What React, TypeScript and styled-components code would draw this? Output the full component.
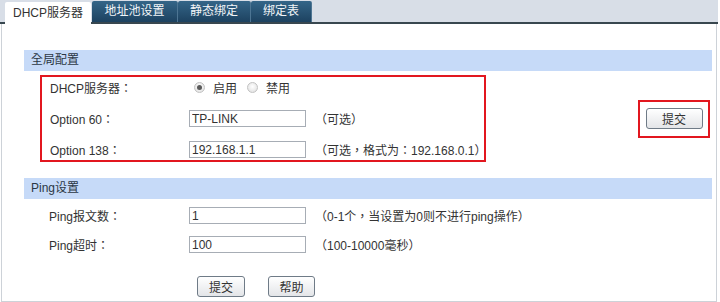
import React from 'react'
import styled, { createGlobalStyle, css } from 'styled-components'

const GlobalStyle = createGlobalStyle`
  body {
    margin: 0;
    background: #ffffff;
    font-family: 'Liberation Sans', 'Noto Sans CJK TC', sans-serif;
    font-size: 12px;
    color: #333333;
  }
`

const Page = styled.div`
  width: 720px;
  height: 302px;
  overflow: hidden;
  background: #ffffff;
`

const TabBar = styled.div`
  display: flex;
  align-items: flex-end;
  height: 22px;
  padding-left: 5px;
  background: #d8dee7;
  border-bottom: 2px solid #38474f;
  margin-right: 2px;
`

const Tab = styled.div<{ $active?: boolean; $w: number }>`
  width: ${(p) => p.$w}px;
  height: 21px;
  line-height: 21px;
  text-align: center;
  font-size: 12px;
  border-radius: 2px 2px 0 0;
  color: #f2f5f8;
  background: linear-gradient(#346588, #1d4260);
  border-right: 1px solid #4d7593;
  ${(p) =>
    p.$active &&
    css`
      height: 22px;
      line-height: 22px;
      margin-bottom: -2px;
      margin-right: 1px;
      color: #333333;
      background: #ffffff;
      border-right: none;
    `}
`

const Frame = styled.div`
  margin-left: 1px;
  width: 716px;
  height: 278px;
  box-sizing: border-box;
  border: 1px solid #cdd2d8;
  border-top: none;
  padding: 26px 4px 0 22px;
`

const SectionHeader = styled.div`
  height: 21px;
  line-height: 21px;
  padding-left: 7px;
  background: #c6daf8;
  color: #2b3744;
  font-size: 12px;
`

const GlobalBody = styled.div`
  display: flex;
  justify-content: space-between;
  align-items: center;
  padding: 4px 2px 16px 16px;
`

const Highlight = styled.div<{ $pad?: boolean }>`
  border: 2px solid #e2171f;
  box-sizing: border-box;
  ${(p) =>
    p.$pad
      ? css`
          width: 72px;
          height: 38px;
          display: flex;
          align-items: center;
          justify-content: center;
        `
      : css`
          width: 446px;
          height: 87px;
          padding-left: 8px;
          display: flex;
          flex-direction: column;
          gap: 10px;
        `}
`

const FormRow = styled.div`
  display: flex;
  align-items: center;
  height: 21px;
`

const Label = styled.div<{ $w: number }>`
  width: ${(p) => p.$w}px;
  flex-shrink: 0;
  color: #333333;
`

const RadioGroup = styled.div`
  display: flex;
  align-items: center;
  padding-left: 5px;
`

const Radio = styled.span<{ $checked?: boolean }>`
  width: 11px;
  height: 11px;
  border-radius: 50%;
  box-sizing: border-box;
  border: 1px solid #c2c2c2;
  background: radial-gradient(circle at 50% 40%, #ffffff, #dcdcdc);
  display: flex;
  align-items: center;
  justify-content: center;
  margin-right: 8px;
  &::after {
    content: '';
    width: 5px;
    height: 5px;
    border-radius: 50%;
    background: ${(p) => (p.$checked ? '#5a5a5a' : 'transparent')};
  }
`

const RadioText = styled.span`
  margin-right: 10px;
`

const Input = styled.input`
  width: 117px;
  height: 17px;
  box-sizing: border-box;
  border: 1px solid #a7adb5;
  padding: 0 2px;
  margin: 0;
  font-family: 'Liberation Sans', 'Noto Sans CJK TC', sans-serif;
  font-size: 12px;
  color: #333333;
  outline: none;
`

const Hint = styled.span`
  margin-left: 9px;
  white-space: nowrap;
`

const Button = styled.button<{ $w: number }>`
  width: ${(p) => p.$w}px;
  height: 21px;
  padding: 0;
  border: 1px solid #6f7b87;
  border-radius: 3px;
  background: linear-gradient(#ffffff, #e3e5e8);
  font-family: 'Liberation Sans', 'Noto Sans CJK TC', sans-serif;
  font-size: 12px;
  color: #333333;
`

const PingBody = styled.div`
  display: flex;
  flex-direction: column;
  gap: 8px;
  padding: 6px 0 0 25px;
`

const ButtonRow = styled.div`
  display: flex;
  gap: 23px;
  margin-top: 13px;
  padding-left: 148px;
`

export default function App() {
  return (
    <>
      <GlobalStyle />
      <Page>
        <TabBar>
          <Tab $active $w={86}>
            DHCP服务器
          </Tab>
          <Tab $w={85}>地址池设置</Tab>
          <Tab $w={72}>静态绑定</Tab>
          <Tab $w={60}>绑定表</Tab>
        </TabBar>
        <Frame>
          <SectionHeader>全局配置</SectionHeader>
          <GlobalBody>
            <Highlight>
              <FormRow>
                <Label $w={139}>DHCP服务器：</Label>
                <RadioGroup>
                  <Radio $checked />
                  <RadioText>启用</RadioText>
                  <Radio />
                  <RadioText>禁用</RadioText>
                </RadioGroup>
              </FormRow>
              <FormRow>
                <Label $w={139}>Option 60：</Label>
                <Input defaultValue="TP-LINK" />
                <Hint>（可选）</Hint>
              </FormRow>
              <FormRow>
                <Label $w={139}>Option 138：</Label>
                <Input defaultValue="192.168.1.1" />
                <Hint>（可选，格式为：192.168.0.1）</Hint>
              </FormRow>
            </Highlight>
            <Highlight $pad>
              <Button $w={57}>提交</Button>
            </Highlight>
          </GlobalBody>
          <SectionHeader>Ping设置</SectionHeader>
          <PingBody>
            <FormRow>
              <Label $w={140}>Ping报文数：</Label>
              <Input defaultValue="1" />
              <Hint>（0-1个，当设置为0则不进行ping操作）</Hint>
            </FormRow>
            <FormRow>
              <Label $w={140}>Ping超时：</Label>
              <Input defaultValue="100" />
              <Hint>（100-10000毫秒）</Hint>
            </FormRow>
            <ButtonRow>
              <Button $w={48}>提交</Button>
              <Button $w={47}>帮助</Button>
            </ButtonRow>
          </PingBody>
        </Frame>
      </Page>
    </>
  )
}
